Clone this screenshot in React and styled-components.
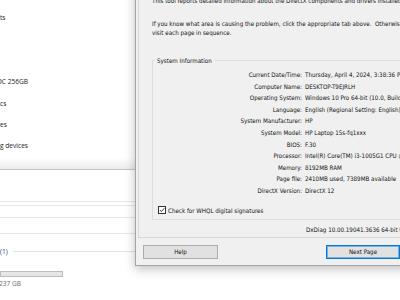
import React from 'react'
import styled, { createGlobalStyle } from 'styled-components'

const GlobalStyle = createGlobalStyle`
  html, body {
    margin: 0;
    padding: 0;
    background: #fff;
    overflow: hidden;
  }
`

const Desktop = styled.div`
  position: relative;
  width: 400px;
  height: 300px;
  overflow: hidden;
  background: #fff;
`

// window behind the dialog
const BackWindow = styled.div`
  display: flex;
  flex-direction: column;
  font-family: "Open Sans", "Noto Sans", sans-serif;
  font-size: 6.6px;
  color: #1b1b1b;
`

const TreePane = styled.div`
  height: 170px;
  box-sizing: border-box;
  padding-top: 7px;
  border-bottom: 1px solid #c5c5c5;
  background: linear-gradient(to bottom, #fff 0, #fff 158px, #ebebeb 169px);
`

const TreeItem = styled.div`
  height: 21.4px;
  line-height: 21.4px;
  white-space: nowrap;
  text-indent: ${p => p.$indent || 0}px;
`

const LowerPane = styled.div`
  display: flex;
  flex-direction: column;
`

const Rule = styled.div`
  height: 1px;
  margin-top: ${p => p.$gap}px;
  background: ${p => p.$tone || '#e6e6e6'};
`

const GroupHeader = styled.div`
  display: flex;
  align-items: center;
  gap: 5px;
  height: 9px;
  margin-top: 12.5px;
  color: #2b3f6b;
  line-height: 9px;
`

const GroupLine = styled.div`
  flex: 1;
  height: 1px;
  background: #e2e2e2;
`

const UsageBar = styled.div`
  width: 63px;
  height: 6px;
  margin-top: 15.5px;
  box-sizing: border-box;
  border: 1px solid #bcbcbc;
  background: #e6e6e6;
`

const DriveNote = styled.div`
  margin-top: 2px;
  line-height: 9px;
  color: #6d6d6d;
  text-indent: -1px;
  white-space: nowrap;
`

// dxdiag window
const Dialog = styled.div`
  position: absolute;
  left: 135px;
  top: -24px;
  width: 300px;
  height: 290px;
  box-sizing: border-box;
  border: 1px solid #a3a3a3;
  background: #f0f0f0;
  box-shadow: 0 3px 10px rgba(0, 0, 0, 0.25);
  padding: 2px 0 0 2px;
  display: flex;
  flex-direction: column;
  font-family: "DejaVu Sans Condensed", "Liberation Sans", sans-serif;
  font-size: 6.2px;
  color: #111;
`

const TabPage = styled.div`
  display: flex;
  flex-direction: column;
  border: 1px solid #d9d9d9;
  border-right: none;
  background: #f0f0f0;
  padding: 16px 0 3px 13px;
`

const Para = styled.p`
  margin: ${p => p.$gap || 0}px 0 0;
  line-height: 9.5px;
  white-space: nowrap;
`

const GroupBox = styled.fieldset`
  margin: 18px 0 0;
  padding: 4px 0;
  min-width: 0;
  width: 300px;
  border: 1px solid #dcdcdc;
`

const GroupTitle = styled.legend`
  margin-left: 1px;
  padding: 0 3px;
  line-height: 9.5px;
`

const InfoGrid = styled.div`
  display: grid;
  grid-template-columns: 149px auto;
  grid-auto-rows: 11.6px;
  column-gap: 3px;
  line-height: 11.6px;
  white-space: nowrap;
`

const Label = styled.div`
  text-align: right;
`

const Value = styled.div``

const CheckRow = styled.label`
  display: flex;
  align-items: center;
  gap: 2px;
  height: 10px;
  margin-top: 8.5px;
  padding-left: 5px;
  white-space: nowrap;
`

const CheckBox = styled.span`
  display: flex;
  width: 8px;
  height: 8px;
  box-sizing: border-box;
  border: 1px solid #333;
  background: #fff;
`

const Version = styled.div`
  margin: 4.5px 0 0 154px;
  line-height: 9.5px;
  white-space: nowrap;
`

const ButtonRow = styled.div`
  display: flex;
  gap: 108px;
  padding: 7px 0 0 5px;
`

const Button = styled.div`
  width: ${p => p.$w}px;
  height: 14px;
  box-sizing: border-box;
  border: 1px solid ${p => (p.$default ? '#0078d7' : '#adadad')};
  box-shadow: ${p => (p.$default ? 'inset 0 0 0 1px rgba(0, 120, 215, 0.45)' : 'none')};
  background: #e1e1e1;
  line-height: 12px;
  text-align: center;
  white-space: nowrap;
`

const info = [
  ['Current Date/Time:', 'Thursday, April 4, 2024, 3:38:36 PM'],
  ['Computer Name:', 'DESKTOP-T9EJRLH'],
  ['Operating System:', 'Windows 10 Pro 64-bit (10.0, Build 19045)'],
  ['Language:', 'English (Regional Setting: English)'],
  ['System Manufacturer:', 'HP'],
  ['System Model:', 'HP Laptop 15s-fq1xxx'],
  ['BIOS:', 'F.30'],
  ['Processor:', 'Intel(R) Core(TM) i3-1005G1 CPU @ 1.20GHz (4 CPUs), ~1.2GHz'],
  ['Memory:', '8192MB RAM'],
  ['Page file:', '2410MB used, 7389MB available'],
  ['DirectX Version:', 'DirectX 12']
]

const tree = [
  { text: 'ts' },
  { text: '' },
  { text: '' },
  { text: 'DC 256GB', indent: -3 },
  { text: 'cs' },
  { text: 'es' },
  { text: 'g devices' }
]

export default function App () {
  return (
    <Desktop>
      <GlobalStyle />
      <BackWindow>
        <TreePane>
          {tree.map((t, i) => (
            <TreeItem key={i} $indent={t.indent}>{t.text}</TreeItem>
          ))}
        </TreePane>
        <LowerPane>
          <Rule $gap={31} />
          <Rule $gap={3} />
          <Rule $gap={11} />
          <Rule $gap={15} />
          <GroupHeader>
            <span>(1)</span>
            <GroupLine />
          </GroupHeader>
          <UsageBar />
          <DriveNote>237 GB</DriveNote>
        </LowerPane>
      </BackWindow>

      <Dialog>
        <TabPage>
          <Para>This tool reports detailed information about the DirectX components and drivers installed on your system.</Para>
          <Para $gap={13}>
            If you know what area is causing the problem, click the appropriate tab above.&nbsp; Otherwise, use the "Next Page" button below to
            <br />
            visit each page in sequence.
          </Para>
          <GroupBox>
            <GroupTitle>System Information</GroupTitle>
            <InfoGrid>
              {info.map(([k, v]) => (
                <React.Fragment key={k}>
                  <Label>{k}</Label>
                  <Value>{v}</Value>
                </React.Fragment>
              ))}
            </InfoGrid>
            <CheckRow>
              <CheckBox>
                <svg width='6' height='6' viewBox='0 0 6 6'>
                  <path d='M0.8 3 L2.4 4.6 L5.3 1.3' fill='none' stroke='#222' strokeWidth='0.9' />
                </svg>
              </CheckBox>
              Check for WHQL digital signatures
            </CheckRow>
          </GroupBox>
          <Version>DxDiag 10.00.19041.3636 64-bit Unicode&nbsp; Copyright © Microsoft. All rights reserved.</Version>
        </TabPage>
        <ButtonRow>
          <Button $w={75}>Help</Button>
          <Button $w={74} $default>Next Page</Button>
        </ButtonRow>
      </Dialog>
    </Desktop>
  )
}
